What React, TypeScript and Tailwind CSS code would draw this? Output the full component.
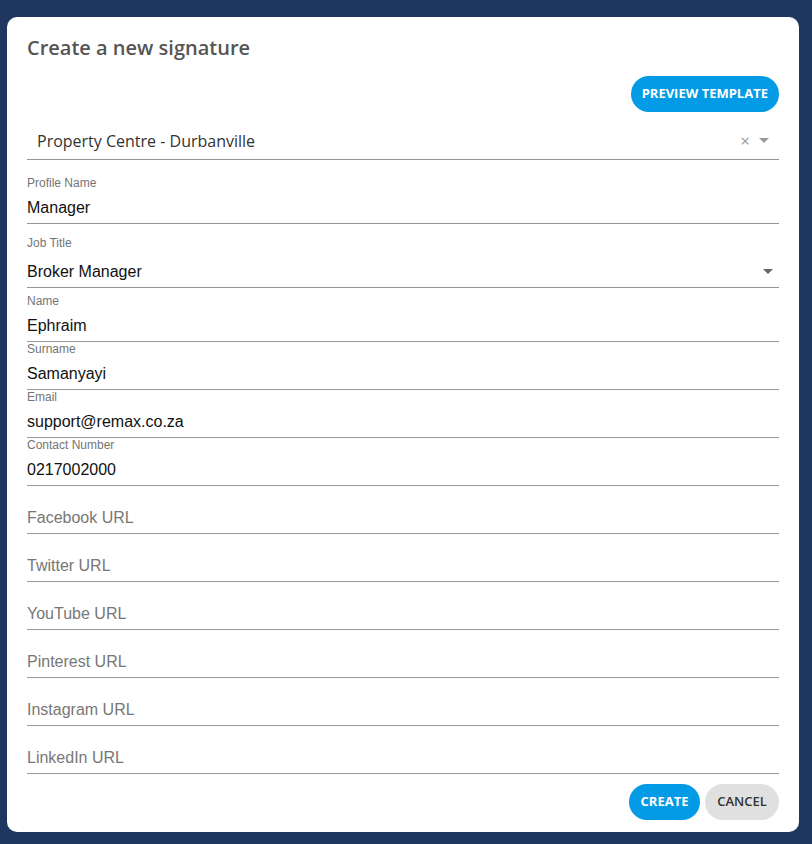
import React from 'react';

const sans = { fontFamily: '"Open Sans", sans-serif' };

const fields = [
  { label: 'Name', value: 'Ephraim' },
  { label: 'Surname', value: 'Samanyayi' },
  { label: 'Email', value: 'support@remax.co.za' },
  { label: 'Contact Number', value: '0217002000' },
  { label: '', value: '', placeholder: 'Facebook URL' },
  { label: '', value: '', placeholder: 'Twitter URL' },
  { label: '', value: '', placeholder: 'YouTube URL' },
  { label: '', value: '', placeholder: 'Pinterest URL' },
  { label: '', value: '', placeholder: 'Instagram URL' },
  { label: '', value: '', placeholder: 'LinkedIn URL' },
];

const Caret: React.FC<{ color: string }> = ({ color }) => (
  <svg width="10" height="5" viewBox="0 0 10 5">
    <path d="M0 0 L10 0 L5 5 Z" fill={color} />
  </svg>
);

const Field: React.FC<{ label: string; value: string; placeholder?: string }> = ({
  label,
  value,
  placeholder,
}) => (
  <div className="flex flex-col">
    <div className="h-[14px] text-[12px] leading-[14px] text-[#757575]">{label}</div>
    <div className="h-[34px] pt-[2px] border-b border-[#949494] flex items-center">
      {value ? (
        <span className="text-[16px] text-[#111]">{value}</span>
      ) : (
        <span className="text-[16px] text-[#777]">{placeholder}</span>
      )}
    </div>
  </div>
);

const App: React.FC = () => {
  return (
    <div className="w-[812px] h-[844px] bg-[#1f365e] pt-[17px] pl-[7px]">
      <div
        className="w-[792px] h-[815px] bg-white rounded-[10px] px-5 pt-[19px] pb-3 flex flex-col"
        style={{ fontFamily: '"Liberation Sans", Arial, sans-serif' }}
      >
        <h2 className="text-[20px] leading-6 font-semibold text-[#555]" style={sans}>
          Create a new signature
        </h2>
        <div className="flex justify-end mt-4">
          <button
            className="h-9 px-[11px] rounded-full bg-[#039be5] text-white text-[13px] font-bold uppercase"
            style={sans}
          >
            Preview Template
          </button>
        </div>
        <div className="mt-[10px] h-[38px] border-b border-[#949494] flex items-center pl-[10px] pr-[10px]" style={sans}>
          <span className="flex-1 text-[16px] text-[#333]">Property Centre - Durbanville</span>
          <span className="text-[17px] text-[#999] leading-none mr-[9px]">×</span>
          <Caret color="#999" />
        </div>
        <div className="mt-4 flex flex-col">
          <div className="h-[14px] text-[12px] leading-[14px] text-[#757575]">Profile Name</div>
          <div className="h-[34px] pt-[2px] border-b border-[#949494] flex items-center">
            <span className="text-[16px] text-[#111]">Manager</span>
          </div>
        </div>
        <div className="mt-3 flex flex-col">
          <div className="h-[14px] text-[12px] leading-[14px] text-[#757575]">Job Title</div>
          <div className="h-[38px] pt-[6px] border-b border-[#949494] flex items-center pr-[6px]">
            <span className="flex-1 text-[16px] text-[#111]">Broker Manager</span>
            <Caret color="#666" />
          </div>
        </div>
        <div className="mt-[6px] flex flex-col">
          {fields.map((f) => (
            <Field key={f.label + (f.placeholder || '')} {...f} />
          ))}
        </div>
        <div className="mt-[10px] flex justify-end gap-[5px]" style={sans}>
          <button className="h-9 w-[71px] rounded-full bg-[#039be5] text-white text-[13px] font-bold uppercase">
            Create
          </button>
          <button className="h-9 w-[74px] rounded-full bg-[#e0e0e0] text-[#333] text-[13px] font-semibold uppercase">
            Cancel
          </button>
        </div>
      </div>
    </div>
  );
};

export default App;
